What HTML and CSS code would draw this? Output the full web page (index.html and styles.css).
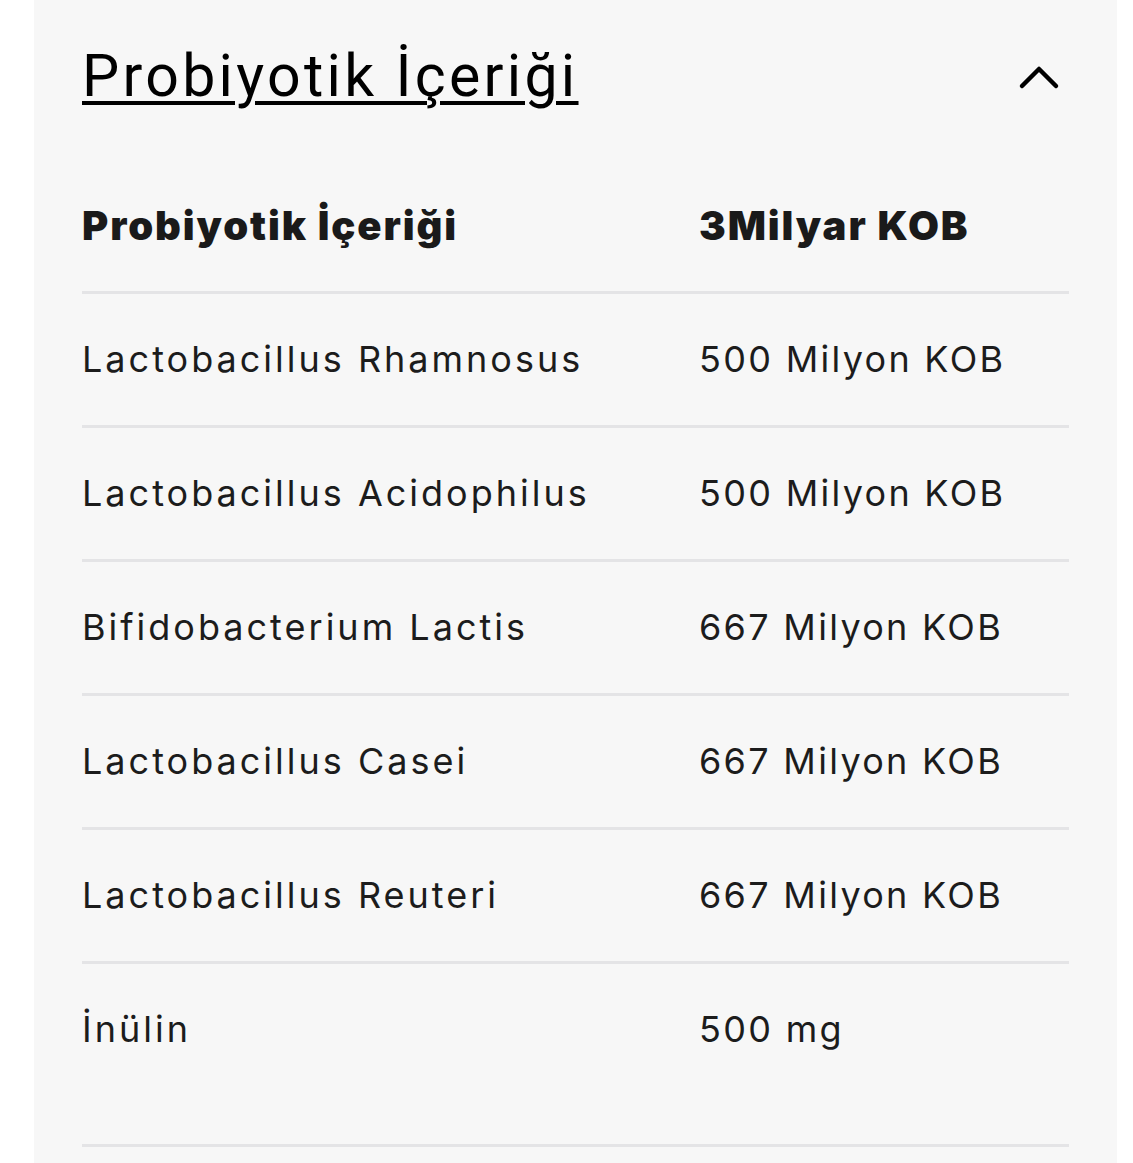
FILE: index.html
```html
<!DOCTYPE html>
<html lang="tr">
<head>
<meta charset="utf-8">
<link rel="stylesheet" href="styles.css">
</head>
<body>
<section class="panel">
  <div class="acc-head">
    <h2 class="acc-title">Probiyotik İçeriği</h2>
    <svg class="chev" width="44" height="28" viewBox="0 0 44 28" aria-hidden="true">
      <polyline points="4,24 21,7 38,24" fill="none" stroke="#000" stroke-width="4.5" stroke-linecap="round" stroke-linejoin="round"/>
    </svg>
  </div>
  <table class="tbl">
    <tr class="row head"><td class="c1">Probiyotik İçeriği</td><td class="c2">3Milyar KOB</td></tr>
    <tr class="row"><td class="c1">Lactobacillus Rhamnosus</td><td class="c2">500 Milyon KOB</td></tr>
    <tr class="row"><td class="c1">Lactobacillus Acidophilus</td><td class="c2">500 Milyon KOB</td></tr>
    <tr class="row"><td class="c1">Bifidobacterium Lactis</td><td class="c2">667 Milyon KOB</td></tr>
    <tr class="row"><td class="c1">Lactobacillus Casei</td><td class="c2">667 Milyon KOB</td></tr>
    <tr class="row"><td class="c1">Lactobacillus Reuteri</td><td class="c2">667 Milyon KOB</td></tr>
    <tr class="row last"><td class="c1">İnülin</td><td class="c2">500 mg</td></tr>
  </table>
</section>
</body>
</html>
```
FILE: styles.css
```css
html, body {
  margin: 0;
  padding: 0;
  background: #ffffff;
}
.panel {
  margin-left: 34px;
  width: 1083px;
  min-height: 1163px;
  box-sizing: border-box;
  padding: 0 48px;
  background: #f7f7f7;
}
.acc-head {
  height: 160px;
  display: flex;
  align-items: flex-start;
  justify-content: space-between;
}
.acc-title {
  margin: 0;
  padding-top: 36px;
  font-family: Roboto, "Liberation Sans", sans-serif;
  font-weight: 400;
  font-size: 59px;
  line-height: 80px;
  letter-spacing: 3.3px;
  color: #000;
  text-decoration: underline;
  text-decoration-thickness: 4px;
  text-underline-offset: 5px;
}
.chev {
  margin-top: 62px;
  margin-right: 7px;
}
.tbl {
  width: 100%;
  border-collapse: collapse;
  font-family: Inter, "Noto Sans", sans-serif;
  color: #1c1c1c;
}
.row td {
  padding: 40px 0;
  height: 51px;
  line-height: 51px;
  font-size: 36px;
  letter-spacing: 3px;
  border-bottom: 3px solid #e4e4e6;
  vertical-align: top;
  white-space: nowrap;
}
.row .c2 {
  letter-spacing: 2.3px;
}
.c1 { width: 617px; }
.head td,
.head .c2 {
  font-weight: 900;
  font-size: 40px;
  letter-spacing: 1.9px;
  color: #1a1a1a;
}
.last td {
  padding-bottom: 89px;
}
```
